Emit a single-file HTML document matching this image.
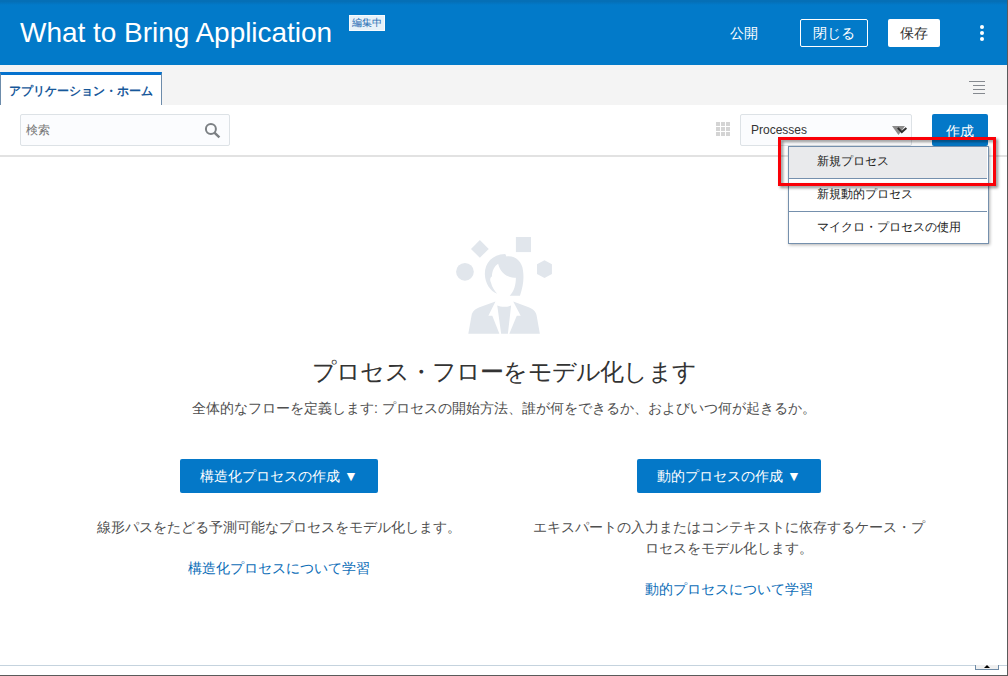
<!DOCTYPE html>
<html lang="ja">
<head>
<meta charset="utf-8">
<title>What to Bring Application</title>
<style>
*{box-sizing:border-box;margin:0;padding:0}
html,body{width:1008px;height:676px;overflow:hidden;background:#fff}
body{font-family:"Liberation Sans",sans-serif;position:relative;color:#333}
.abs{position:absolute}
#hdr{left:0;top:0;width:1008px;height:65px;background:#027ac9}
#hdrshade{left:0;top:0;width:1008px;height:5px;background:linear-gradient(#056fb6 30%,#027ac9)}
#title{left:20px;top:15px;font-size:28px;line-height:36px;color:#fff;white-space:nowrap;letter-spacing:-.03px}
#badge{left:349px;top:15px;width:36px;height:16px;background:#e6f1f9;border:1px solid #f7fbfe;color:#1f6cb3;font-size:10px;line-height:14px;text-align:center;white-space:nowrap}
#pub{left:730px;top:23px;font-size:14px;line-height:20px;color:#fff;white-space:nowrap}
#close{left:800px;top:19px;width:68px;height:28px;border:1px solid #fff;border-radius:2px;color:#fff;font-size:14px;line-height:26px;text-align:center}
#save{left:888px;top:19px;width:52px;height:28px;background:#fff;border-radius:2px;color:#333;font-size:14px;line-height:28px;text-align:center}
.dot{width:4px;height:4px;border-radius:2px;background:#fff;left:980px}
#tabbar{left:0;top:65px;width:1008px;height:40px;background:#f4f4f4}
#tab{left:0;top:72px;width:162px;height:33px;background:#fff;border-top:3px solid #0572ce;border-right:1px solid #6d8cab;border-left:1px solid #6d8cab;font-size:12px;font-weight:bold;color:#17589a;line-height:32px;text-align:center;white-space:nowrap}
.hl{height:1px;background:#85898f}
#tool{left:0;top:105px;width:1008px;height:52px;background:#fff;border-bottom:2px solid #e2e2e2}
#search{left:20px;top:114px;width:210px;height:32px;border:1px solid #dde2e6;border-radius:2px;background:#fbfcfe}
#search span{position:absolute;left:5px;top:8px;font-size:12px;line-height:14px;color:#757575}
#sel{left:740px;top:114px;width:172px;height:32px;border:1px solid #dde2e6;border-radius:2px;background:#fbfcfe}
#sel span{position:absolute;left:10px;top:8px;font-size:12px;line-height:14px;color:#333}
#create{left:932px;top:114px;width:56px;height:32px;background:#0478c8;border-radius:2px;color:#fff;font-size:14px;line-height:34px;text-align:center}
#menu{left:788px;top:146px;width:201px;height:98px;background:#fff;border:1px solid #7590ad;box-shadow:1px 1px 3px rgba(0,0,0,.3)}
.mi{position:absolute;left:0;width:198px;height:31px;font-size:12px;line-height:30px;padding-left:28px;color:#222;white-space:nowrap}
.msep{position:absolute;left:0;width:198px;height:1px;background:#7590ad}
#red{left:778px;top:137px;width:218px;height:49px;border:3px solid #fa0007;filter:drop-shadow(2px 2px 1.500px rgba(0,0,0,.45))}
#h1{left:0;top:354px;width:1008px;text-align:center;font-size:24px;line-height:36px;color:#333;white-space:nowrap;letter-spacing:-.81px}
#sub{left:0;top:398px;width:1008px;text-align:center;font-size:14px;line-height:20px;color:#4f4f4f;white-space:nowrap}
.btn{background:#0478c8;border-radius:2px;color:#fff;font-size:14px;line-height:34px;text-align:center;height:34px;top:459px;white-space:nowrap}
.desc{font-size:14px;line-height:21px;color:#4f4f4f;text-align:center}
.lnk{font-size:14px;line-height:21px;color:#0b6db7;text-align:center;white-space:nowrap}
#botline{left:0;top:665px;width:1008px;height:1px;background:#c5d3de}
#bottab{left:975px;top:665px;width:24px;height:5px;border:1px solid #6f8ba6;border-top:none;background:#f0f0f0}
#edgeb{left:0;top:675px;width:1008px;height:1px;background:#5a5a5a}
#edger{left:1007px;top:0;width:1px;height:676px;background:#5a5a5a}
</style>
</head>
<body>
<div class="abs" id="hdr"></div>
<div class="abs" id="hdrshade"></div>
<div class="abs" id="title">What to Bring Application</div>
<div class="abs" id="badge">編集中</div>
<div class="abs" id="pub">公開</div>
<div class="abs" id="close">閉じる</div>
<div class="abs" id="save">保存</div>
<div class="abs dot" style="top:25px"></div>
<div class="abs dot" style="top:31px"></div>
<div class="abs dot" style="top:37px"></div>

<div class="abs" id="tabbar"></div>
<div class="abs" id="tab">アプリケーション・ホーム</div>
<div class="abs hl" style="left:969px;top:81px;width:16px"></div>
<div class="abs hl" style="left:973px;top:85px;width:12px"></div>
<div class="abs hl" style="left:973px;top:89px;width:12px"></div>
<div class="abs hl" style="left:973px;top:93px;width:12px"></div>

<div class="abs" id="tool"></div>
<div class="abs" id="search"><span>検索</span>
<svg class="abs" style="left:183px;top:7px" width="18" height="18" viewBox="0 0 18 18"><circle cx="6.900" cy="7" r="5" fill="none" stroke="#7c8084" stroke-width="2"/><path d="M10.400 10.600 L15.400 15.400" stroke="#7c8084" stroke-width="2.400"/></svg>
</div>
<svg class="abs" style="left:716px;top:122px" width="15" height="15" viewBox="0 0 15 15" fill="#d4d4d4"><rect x="0" y="0" width="4" height="4"/><rect x="5" y="0" width="4" height="4"/><rect x="10" y="0" width="4" height="4"/><rect x="0" y="5" width="4" height="4"/><rect x="5" y="5" width="4" height="4"/><rect x="10" y="5" width="4" height="4"/><rect x="0" y="10" width="4" height="4"/><rect x="5" y="10" width="4" height="4"/><rect x="10" y="10" width="4" height="4"/></svg>
<div class="abs" id="sel"><span>Processes</span>
<svg class="abs" style="left:150px;top:10px" width="18" height="12" viewBox="0 0 18 12"><path d="M1 1 L14 1 L7.500 10 Z" fill="#8c8c8c"/><path d="M6.800 2.900 L10.800 7.100 L15.400 3.100" fill="none" stroke="#2e2e2e" stroke-width="2"/></svg>
</div>
<div class="abs" id="create">作成</div>

<div class="abs" id="menu">
<div class="mi" style="top:0;background:#e9eaec;line-height:29px">新規プロセス</div>
<div class="msep" style="top:31px"></div>
<div class="mi" style="top:32px">新規動的プロセス</div>
<div class="msep" style="top:64px"></div>
<div class="mi" style="top:65px">マイクロ・プロセスの使用</div>
</div>
<div class="abs" id="red"></div>

<svg class="abs" id="ico" style="left:444px;top:226px" width="120" height="120" viewBox="0 0 676 676" fill="#e1e6ec">
<circle cx="118" cy="258" r="50"/>
<path d="M202 79 L252 129 L202 179 L152 129 Z"/>
<rect x="405" y="62" width="85" height="85"/>
<path d="M566 193 L608 216 L608 270 L566 293 L524 270 L524 216 Z"/>
<path d="M345 158 L352 172 C400 165 440 200 445 250 C452 300 445 340 428 393 L370 393 C395 370 405 330 405 292 C370 292 320 275 305 212 C285 225 270 250 270 285 C258 290 258 310 265 320 C270 345 285 365 300 382 C260 365 232 325 230 270 C230 210 270 160 345 158 Z"/>
<path d="M137 607 L155 505 C160 480 175 468 200 458 L290 425 L250 505 L272 505 L312 607 Z"/>
<path d="M540 607 L522 505 C517 480 502 468 477 458 L390 425 L432 505 L410 505 L368 607 Z"/>
<path d="M300 448 C320 458 358 458 378 448 L360 607 L322 607 Z"/>
</svg>

<div class="abs" id="h1">プロセス・フローをモデル化します</div>
<div class="abs" id="sub">全体的なフローを定義します: プロセスの開始方法、誰が何をできるか、およびいつ何が起きるか。</div>

<div class="abs btn" style="left:180px;width:198px">構造化プロセスの作成 ▼</div>
<div class="abs btn" style="left:637px;width:184px">動的プロセスの作成 ▼</div>

<div class="abs desc" style="left:60px;top:517px;width:438px;white-space:nowrap">線形パスをたどる予測可能なプロセスをモデル化します。</div>
<div class="abs lnk" style="left:60px;top:558px;width:438px">構造化プロセスについて学習</div>

<div class="abs desc" style="left:528px;top:517px;width:402px">エキスパートの入力またはコンテキストに依存するケース・プロセスをモデル化します。</div>
<div class="abs lnk" style="left:528px;top:579px;width:402px">動的プロセスについて学習</div>

<div class="abs" id="botline"></div>
<div class="abs" id="bottab"><svg class="abs" style="left:8px;top:0" width="6" height="3" viewBox="0 0 6 3"><path d="M0 3 L3 0 L6 3 Z" fill="#000"/></svg></div>
<div class="abs" id="edgeb"></div>
<div class="abs" id="edger"></div>
</body>
</html>
